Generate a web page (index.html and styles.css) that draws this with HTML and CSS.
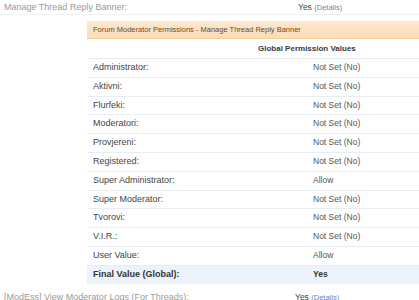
FILE: index.html
```html
<!DOCTYPE html>
<html lang="en">
<head>
    <meta charset="UTF-8">
    <meta name="viewport" content="width=device-width, initial-scale=1.0">
    <title>Permission Details</title>
    <link rel="stylesheet" href="styles.css">
</head>
<body>

    <div class="perm-row">
        <span class="perm-name">Manage Thread Reply Banner:</span>
        <span class="perm-value">Yes <a class="details" href="#">(Details)</a></span>
    </div>

    <div class="perm-box">
        <div class="box-title">Forum Moderator Permissions - Manage Thread Reply Banner</div>
        <div class="box-head">Global Permission Values</div>
        <div class="group-row"><span class="group-name">Administrator:</span><span class="group-value">Not Set (No)</span></div>
        <div class="group-row"><span class="group-name">Aktivni:</span><span class="group-value">Not Set (No)</span></div>
        <div class="group-row"><span class="group-name">Flurfeki:</span><span class="group-value">Not Set (No)</span></div>
        <div class="group-row"><span class="group-name">Moderatori:</span><span class="group-value">Not Set (No)</span></div>
        <div class="group-row"><span class="group-name">Provjereni:</span><span class="group-value">Not Set (No)</span></div>
        <div class="group-row"><span class="group-name">Registered:</span><span class="group-value">Not Set (No)</span></div>
        <div class="group-row"><span class="group-name">Super Administrator:</span><span class="group-value">Allow</span></div>
        <div class="group-row"><span class="group-name">Super Moderator:</span><span class="group-value">Not Set (No)</span></div>
        <div class="group-row"><span class="group-name">Tvorovi:</span><span class="group-value">Not Set (No)</span></div>
        <div class="group-row"><span class="group-name">V.I.R.:</span><span class="group-value">Not Set (No)</span></div>
        <div class="group-row"><span class="group-name">User Value:</span><span class="group-value">Allow</span></div>
        <div class="group-row final"><span class="group-name">Final Value (Global):</span><span class="group-value">Yes</span></div>
    </div>

    <div class="perm-row last">
        <span class="perm-name">[ModEss] View Moderator Logs (For Threads):</span>
        <span class="perm-value">Yes <a class="details" href="#">(Details)</a></span>
    </div>

</body>
</html>
```

FILE: styles.css
```css
body {
    font-family: "Liberation Sans", Arial, sans-serif;
    font-size: 9px;
    margin: 0;
    background-color: #fff;
    color: #444;
    overflow: hidden;
}
.perm-row {
    display: flex;
    height: 14px;
    line-height: 14px;
    border-bottom: 1px solid #edf2f7;
}
.perm-row.last {
    margin-top: 6px;
    border-bottom: none;
}
.perm-name {
    width: 298px;
    padding-left: 4px;
    box-sizing: border-box;
    color: #9a9a9a;
}
.perm-row.last .perm-name {
    width: 295px;
}
.perm-value {
    font-size: 8.5px;
    color: #444;
}
.details {
    color: #6a86b0;
    font-size: 7.5px;
    text-decoration: none;
}
.perm-box {
    margin: 6px 0 0 87px;
}
.box-title {
    height: 17px;
    line-height: 17px;
    padding-left: 6px;
    font-size: 7.5px;
    color: #6b4b2a;
    background: linear-gradient(#fde8cf, #fbdcb6);
    border-bottom: 1px solid #f3cf9f;
}
.box-head {
    height: 19px;
    line-height: 19px;
    padding-left: 171px;
    font-size: 8px;
    font-weight: bold;
    color: #3a3a3a;
    border-bottom: 1px solid #e3ebf3;
}
.group-row {
    display: flex;
    height: 17.8px;
    line-height: 17.8px;
    border-bottom: 1px solid #e8eef5;
}
.group-name {
    width: 226px;
    padding-left: 6px;
    box-sizing: border-box;
    color: #444;
}
.group-value {
    font-size: 8.5px;
    color: #555;
}
.group-row.final {
    background-color: #edf3fa;
    border-bottom: none;
}
.group-row.final .group-name,
.group-row.final .group-value {
    font-weight: bold;
    color: #333;
}
```
